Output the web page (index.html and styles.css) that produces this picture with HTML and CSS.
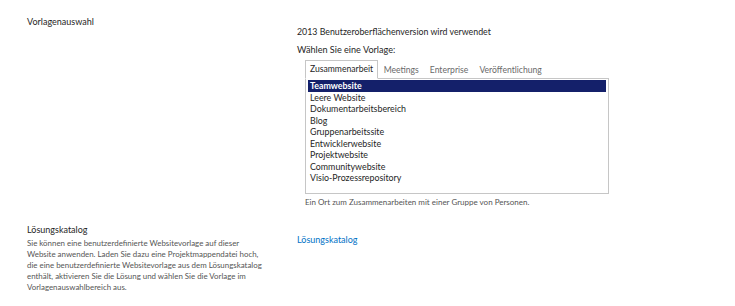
FILE: index.html
```html
<!doctype html>
<html lang="de">
<head>
<meta charset="UTF-8">
<title>Vorlagenauswahl</title>
<link rel="stylesheet" href="styles.css">
</head>
<body>

<!-- ===== Vorlagenauswahl ===== -->
<div class="section first">
  <div class="label">
    <div class="label-title">Vorlagenauswahl</div>
  </div>
  <div class="field">
    <div class="version">2013 Benutzeroberflächenversion wird verwendet</div>
    <div class="choose">Wählen Sie eine Vorlage:</div>
    <div class="picker">
      <div class="tabs">
        <span class="tab active">Zusammenarbeit</span>
        <span class="tab">Meetings</span>
        <span class="tab">Enterprise</span>
        <span class="tab">Veröffentlichung</span>
      </div>
      <div class="listbox">
        <div class="item selected">Teamwebsite</div>
        <div class="item">Leere Website</div>
        <div class="item">Dokumentarbeitsbereich</div>
        <div class="item">Blog</div>
        <div class="item">Gruppenarbeitssite</div>
        <div class="item">Entwicklerwebsite</div>
        <div class="item">Projektwebsite</div>
        <div class="item">Communitywebsite</div>
        <div class="item">Visio-Prozessrepository</div>
      </div>
      <div class="hint">Ein Ort zum Zusammenarbeiten mit einer Gruppe von Personen.</div>
    </div>
  </div>
</div>

<!-- ===== Lösungskatalog ===== -->
<div class="section second">
  <div class="label">
    <div class="label-title">Lösungskatalog</div>
    <div class="label-text">Sie können eine benutzerdefinierte Websitevorlage auf dieser<br>
      Website anwenden. Laden Sie dazu eine Projektmappendatei hoch,<br>
      die eine benutzerdefinierte Websitevorlage aus dem Lösungskatalog<br>
      enthält, aktivieren Sie die Lösung und wählen Sie die Vorlage im<br>
      Vorlagenauswahlbereich aus.</div>
  </div>
  <div class="field">
    <a href="#" class="link">Lösungskatalog</a>
  </div>
</div>

</body>
</html>
```

FILE: styles.css
```css
html,body{margin:0;padding:0;background:#fff}
body{font-family:Lato,"Noto Sans",Arial,sans-serif;color:#444;width:735px;height:306px;overflow:hidden}

/* ---- Abschnitt: Label links, Feld rechts ---- */
.section{display:flex;padding-left:27px}
.section.first{padding-top:15px}
.label{width:270px;flex:none}
.label-title{font-size:9px;color:#262626;line-height:14px}
.label-text{font-size:7.9px;line-height:11px;margin-top:1px;width:262px;color:#555;white-space:nowrap}

/* ---- Vorlagenauswahl ---- */
.version{font-size:8.8px;color:#262626;margin-top:10px;line-height:13px}
.choose{font-size:9.1px;color:#262626;margin-top:5px;line-height:14px}
.picker{margin-left:8px;margin-top:3px;width:304px}
.tabs{display:flex;align-items:flex-end;height:18px}
.tab{font-size:8.6px;color:#6a6a6a;padding:0 5.5px;line-height:16px}
.tab.active{color:#262626;border:1px solid #c6c6c6;border-bottom:1px solid #fff;margin-bottom:-1px;padding:0 4px;height:17px;position:relative;z-index:1;background:#fff}
.listbox{border:1px solid #c6c6c6;padding:1px 2px;box-sizing:border-box;height:116px}
.item{font-size:8.85px;line-height:11.5px;color:#262626;padding-left:2px}
.item.selected{background:#14206a;color:#fff;font-weight:bold}
.hint{font-size:8px;color:#555;margin-top:2px;line-height:12px}

/* ---- Lösungskatalog ---- */
.section.second{margin-top:15px}
.link{font-size:9px;color:#0072c6;text-decoration:none;display:block;margin-top:11px}
```
